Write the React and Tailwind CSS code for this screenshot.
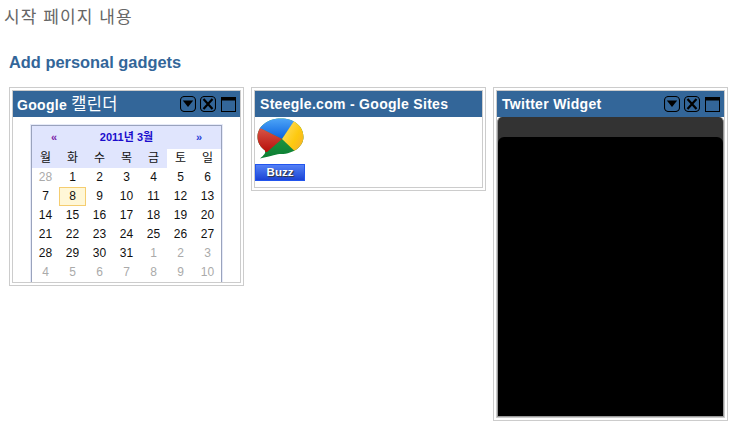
const font = "font-['Liberation_Sans','Noto_Sans_CJK_KR',sans-serif]";

function Controls() {
  return (
    <div className="flex items-center">
      <svg width="16" height="16" viewBox="0 0 16 16" fill="none">
        <rect x="0.5" y="0.5" width="15" height="15" rx="4" stroke="#000" strokeWidth="1.1" />
        <path d="M2.8 4.5h10.4L8 11z" fill="#000" />
      </svg>
      <svg width="16" height="16" viewBox="0 0 16 16" fill="none" className="ml-[4px]">
        <rect x="0.5" y="0.5" width="15" height="15" rx="4" stroke="#000" strokeWidth="1.1" />
        <path d="M3.5 3l9 10M12.5 3l-9 10" stroke="#000" strokeWidth="2.2" />
      </svg>
      <svg width="15" height="15" viewBox="0 0 15 15" fill="none" className="ml-[5px]">
        <rect x="0.5" y="0.5" width="14" height="14" stroke="#000" />
        <rect x="0.5" y="0.5" width="14" height="3" fill="#000" />
      </svg>
    </div>
  );
}

function Gadget({ title, controls, pad, children }) {
  return (
    <div className="w-[235px] border border-[#cccccc] p-[2px] bg-white">
      <div className="border border-[#cccccc]">
        <div className={`h-[26px] bg-[#336699] flex items-center justify-between pr-[4px] ${pad}`}>
          <span className="text-white font-bold text-[14px] tracking-[0.3px]">{title}</span>
          {controls && <Controls />}
        </div>
        {children}
      </div>
    </div>
  );
}

const weekdays = ["월", "화", "수", "목", "금", "토", "일"];
const cells = [
  [28, 1], [1], [2], [3], [4], [5], [6],
  [7], [8], [9], [10], [11], [12], [13],
  [14], [15], [16], [17], [18], [19], [20],
  [21], [22], [23], [24], [25], [26], [27],
  [28], [29], [30], [31], [1, 1], [2, 1], [3, 1],
  [4, 1], [5, 1], [6, 1], [7, 1], [8, 1], [9, 1], [10, 1],
];

function Calendar() {
  return (
    <div className="h-[165px] overflow-hidden pt-[8px] pl-[18px]">
      <div className="w-[191px] border border-[#9aa3bd] border-b-0 h-[170px] shadow-[0_0_0_1px_#e6eaf8]">
        <div className="bg-[#e0e5fd] h-[23px] flex items-center justify-between pl-[19px] pr-[19px] text-[11px] font-bold">
          <span className="text-[#7a1fa8]">«</span>
          <span className="text-[#1a0ccc]">2011년 3월</span>
          <span className="text-[#2a3fd8]">»</span>
        </div>
        <div className="grid grid-cols-[repeat(7,27px)] auto-rows-[19px] text-[12px] text-center leading-[19px] text-[#111111]">
          {weekdays.map((d, i) => (
            <div key={d} className={i < 5 ? "bg-[#e0e5fd]" : "bg-white"}>{d}</div>
          ))}
          {cells.map(([n, muted], i) => (
            <div
              key={i}
              className={
                n === 8 && !muted
                  ? "bg-[#fff7d7] border border-[#f5cd70] leading-[17px]"
                  : muted
                    ? "text-[#aaaaaa]"
                    : ""
              }
            >
              {n}
            </div>
          ))}
        </div>
      </div>
    </div>
  );
}

function BuzzLogo() {
  return (
    <svg width="47" height="41" viewBox="0 0 47 41" className="ml-[2px]">
      <defs>
        <clipPath id="bubble">
          <path d="M24 0.5C37 0.5 46.5 8 46.5 19C46.5 28 37 36 24 36C20 36 15 38 3 40.5C7 37 9 35 8 32.5C3 29 0.5 24 0.5 19C0.5 8 11 0.5 24 0.5Z" />
        </clipPath>
        <linearGradient id="blue" x1="0" y1="0" x2="0" y2="1">
          <stop offset="0" stopColor="#4fa6f7" />
          <stop offset="1" stopColor="#0a62e0" />
        </linearGradient>
        <linearGradient id="red" x1="0" y1="0" x2="0" y2="1">
          <stop offset="0" stopColor="#d9584a" />
          <stop offset="1" stopColor="#b80f0a" />
        </linearGradient>
        <linearGradient id="yellow" x1="0" y1="0" x2="1" y2="1">
          <stop offset="0" stopColor="#ffe27a" />
          <stop offset="0.55" stopColor="#fdc90f" />
          <stop offset="1" stopColor="#f3a33c" />
        </linearGradient>
        <linearGradient id="green" x1="0" y1="0" x2="0" y2="1">
          <stop offset="0" stopColor="#2ea84a" />
          <stop offset="1" stopColor="#0b7d33" />
        </linearGradient>
      </defs>
      <g clipPath="url(#bubble)">
        <rect width="47" height="41" fill="url(#green)" />
        <path d="M0 0H40L25 21L5 11L0 11Z" fill="url(#blue)" />
        <path d="M0 9L5 11L25 21L10 34L0 34Z" fill="url(#red)" />
        <path d="M39 0H47V41H46L25 21Z" fill="url(#yellow)" />
      </g>
    </svg>
  );
}

function Buzz() {
  return (
    <div className="pt-[1px] pb-[6px] flex flex-col items-start">
      <BuzzLogo />
      <div className="mt-[5px] w-[50px] h-[17px] border border-[#2255ee] bg-gradient-to-b from-[#5480f6] to-[#1c43d4] text-white font-bold text-[11.5px] leading-[14px] text-center [text-shadow:1px_1px_1px_#333]">
        Buzz
      </div>
    </div>
  );
}

function Twitter() {
  return (
    <div className="h-[300px] bg-[#333333] rounded-t-[5px] border-x border-b border-[#999999] border-t-0 pt-[20px]">
      <div className="h-full bg-black rounded-t-[6px]" />
    </div>
  );
}

export default function App() {
  return (
    <div className={`${font} w-[731px] h-[429px] bg-white overflow-hidden`}>
      <div className="pl-[4px] pt-[8px] text-[17px] leading-[20px] text-[#666666] tracking-[1.1px] h-[52px]">
        시작 페이지 내용
      </div>
      <div className="pl-[9px] h-[35px] text-[16.4px] leading-[20px] font-bold text-[#336699]">Add personal gadgets</div>
      <div className="flex items-start pl-[9px] gap-[7px]">
        <Gadget
          title={
            <>
              Google <span className="font-normal text-[16.5px]">캘린더</span>
            </>
          }
          pad="pl-[4px]"
          controls
        >
          <Calendar />
        </Gadget>
        <Gadget title="Steegle.com - Google Sites" pad="pl-[5px]">
          <Buzz />
        </Gadget>
        <Gadget title="Twitter Widget" pad="pl-[5px]" controls>
          <Twitter />
        </Gadget>
      </div>
    </div>
  );
}
